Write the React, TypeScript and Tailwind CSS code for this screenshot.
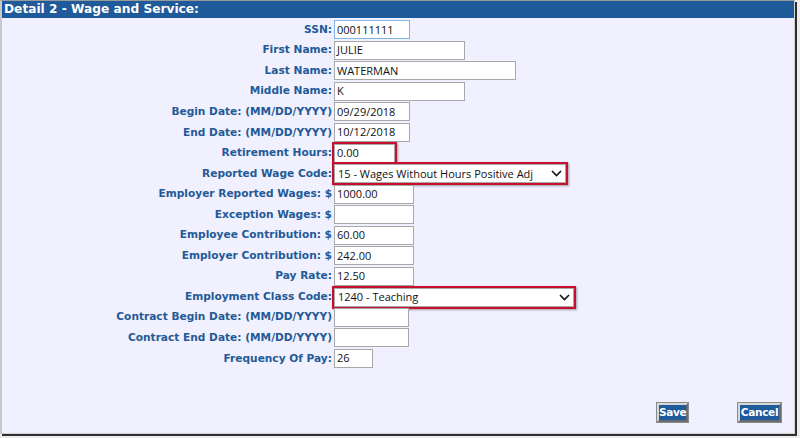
import type { ReactNode } from "react";

type Field = {
  label: string;
  value?: string;
  width: number;
  kind?: "input" | "select";
  flagged?: boolean;
  focused?: boolean;
};

const FIELDS: Field[] = [
  { label: "SSN:", value: "000111111", width: 76, focused: true },
  { label: "First Name:", value: "JULIE", width: 131 },
  { label: "Last Name:", value: "WATERMAN", width: 182 },
  { label: "Middle Name:", value: "K", width: 131 },
  { label: "Begin Date: (MM/DD/YYYY)", value: "09/29/2018", width: 76 },
  { label: "End Date: (MM/DD/YYYY)", value: "10/12/2018", width: 76 },
  { label: "Retirement Hours:", value: "0.00", width: 61, flagged: true },
  {
    label: "Reported Wage Code:",
    value: "15 - Wages Without Hours Positive Adj",
    width: 232,
    kind: "select",
    flagged: true,
  },
  { label: "Employer Reported Wages: $", value: "1000.00", width: 80 },
  { label: "Exception Wages: $", value: "", width: 80 },
  { label: "Employee Contribution: $", value: "60.00", width: 80 },
  { label: "Employer Contribution: $", value: "242.00", width: 80 },
  { label: "Pay Rate:", value: "12.50", width: 80 },
  {
    label: "Employment Class Code:",
    value: "1240 - Teaching",
    width: 240,
    kind: "select",
    flagged: true,
  },
  { label: "Contract Begin Date: (MM/DD/YYYY)", value: "", width: 75 },
  { label: "Contract End Date: (MM/DD/YYYY)", value: "", width: 75 },
  { label: "Frequency Of Pay:", value: "26", width: 39 },
];

const inputFont = { fontFamily: '"Open Sans", "Noto Sans", sans-serif' };

function Chevron() {
  return (
    <svg width="11" height="7" viewBox="0 0 11 7" className="shrink-0">
      <path d="M1 1 L5.5 5.5 L10 1" fill="none" stroke="#111" strokeWidth="1.6" />
    </svg>
  );
}

function Control({ f }: { f: Field }) {
  if (f.kind === "select") {
    return (
      <div
        className="flex h-[19px] items-center justify-between border border-[#a8a8a8] bg-white pl-[3px] pr-[3px] text-[11px] text-[#111]"
        style={{ ...inputFont, width: f.width }}
      >
        <span>{f.value}</span>
        <Chevron />
      </div>
    );
  }
  return (
    <div
      className={
        "flex h-[19px] items-center bg-white pl-[2px] text-[11px] text-[#111] " +
        (f.focused ? "border border-[#7fb2e5]" : "border border-[#a8a8a8]")
      }
      style={{ ...inputFont, width: f.width }}
    >
      {f.value}
    </div>
  );
}

function Flag({ on, children }: { on?: boolean; children: ReactNode }) {
  if (!on) return <>{children}</>;
  return (
    <div className="-my-[1px] -ml-[2px] border-2 border-[#c8102e] shadow-[1px_1px_2px_rgba(0,0,0,0.35)]">
      {children}
    </div>
  );
}

function Button({ label, width }: { label: string; width: number }) {
  return (
    <button
      type="button"
      className="h-[19px] border-2 border-t-[#d8d8d8] border-l-[#d8d8d8] border-r-[#6b6b6b] border-b-[#6b6b6b] bg-[#1f5a9a] p-0 text-[10.5px] font-bold leading-none tracking-[-0.3px] text-white outline outline-1 outline-[#8a8a8a]"
      style={{ fontFamily: '"DejaVu Sans", Verdana, sans-serif', width }}
    >
      {label}
    </button>
  );
}

export default function App() {
  return (
    <div className="h-[438px] w-[800px] overflow-hidden bg-[#ececec]">
      <div
        className="flex h-[434px] w-[795px] flex-col border-l-2 border-t border-r border-b border-l-[#c8c8c8] border-t-[#9a9a9a] border-r-[#d0d0d0] border-b-[#d0d0d0] bg-[#f0f0fe] shadow-[2px_2px_0_#2f2f2f]"
        style={{ fontFamily: '"DejaVu Sans", Verdana, sans-serif' }}
      >
        <div className="flex h-[17px] items-center bg-[#1f5a9a] pl-[2px] text-[12.2px] font-bold text-white">
          Detail 2 - Wage and Service:
        </div>

        <div className="flex flex-col pt-[1.5px]">
          {FIELDS.map((f) => (
            <div key={f.label} className="grid h-[20.56px] grid-cols-[331px_1fr] items-center">
              <span className="pr-[1px] text-right text-[10.6px] font-bold text-[#235a97]">
                {f.label}
              </span>
              <div className="flex pl-[1px]">
                <Flag on={f.flagged}>
                  <Control f={f} />
                </Flag>
              </div>
            </div>
          ))}
        </div>

        <div className="mt-auto flex justify-end gap-[50px] pb-[11px] pr-[13px]">
          <Button label="Save" width={31} />
          <Button label="Cancel" width={43} />
        </div>
      </div>
    </div>
  );
}
